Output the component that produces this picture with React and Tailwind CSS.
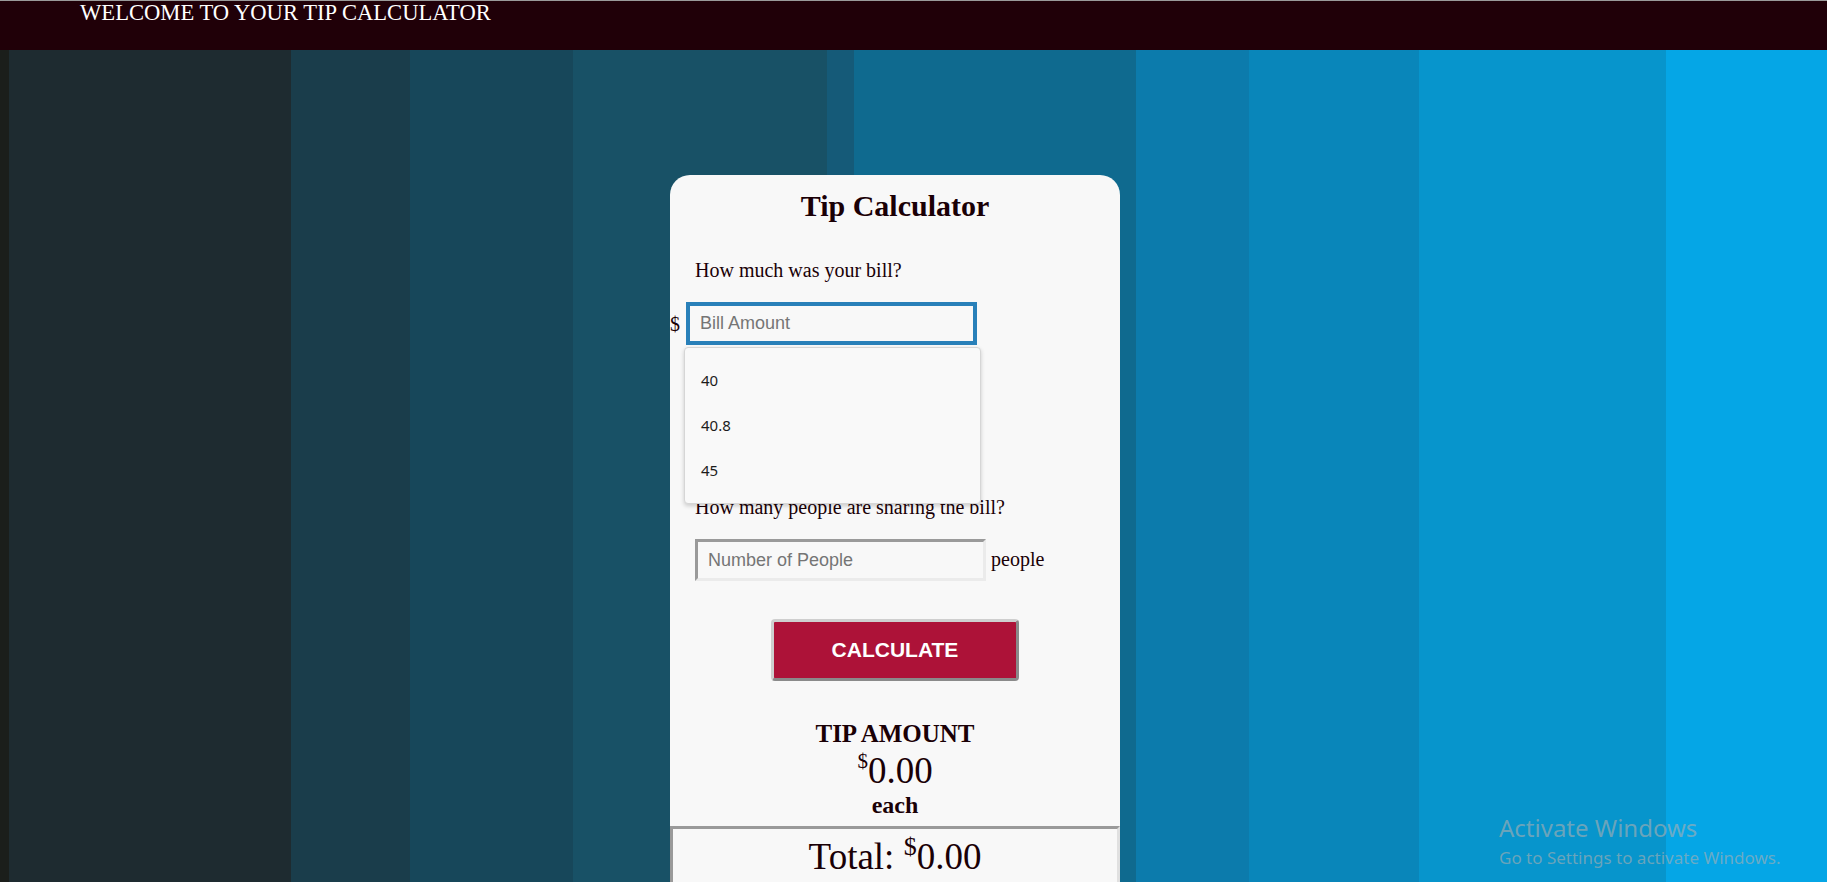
import React from "react";

// banded backdrop (matches the stepped gradient of the capture)
const backdrop =
  "bg-[linear-gradient(to_right,#1b1e1b_0_9px,#1e2b30_9px_291px,#1a3d4b_291px_410px,#17475a_410px_573px,#185166_573px_827px,#155a78_827px_854px,#0f6a8f_854px_1136px,#0c7bac_1136px_1249px,#0986ba_1249px_1419px,#0795cc_1419px_1666px,#05a6e6_1666px)]";

const suggestions = ["40", "40.8", "45"];

const App = () => {
  return (
    <div
      className={`relative min-h-screen h-[882px] overflow-hidden ${backdrop} font-['Liberation_Serif',serif] text-[#1a0006]`}
    >
      {/* Top bar */}
      <header className="h-[50px] bg-[#200008] border-t border-[#9a9a9a] pl-[80px]">
        <h2 className="text-[22.6px] leading-[24px] text-white font-normal">
          WELCOME TO YOUR TIP CALCULATOR
        </h2>
      </header>

      {/* Calculator card */}
      <div className="ml-[670px] mt-[125px] w-[450px] h-[760px] bg-[#f8f8f8] rounded-t-[20px] pt-[11px] flex flex-col">
        <h1 className="text-center text-[30px] leading-[40px] font-bold">
          Tip Calculator
        </h1>

        <p className="mt-[32px] pl-[25px] text-[20px] leading-[24px]">
          How much was your bill?
        </p>

        <div className="mt-[20px] flex items-center">
          <span className="text-[20px] leading-[24px] w-[14px]">$</span>
          <div className="relative ml-[2px]">
            <input
              type="text"
              placeholder="Bill Amount"
              className="w-[291px] h-[43px] border-[4px] border-[#2980b9] bg-[#f8f8f8] pl-[10px] text-[18px] font-['Liberation_Sans',Arial,sans-serif] placeholder:text-[#757575] outline-none"
            />
            {/* autocomplete popup */}
            <ul className="absolute left-[-2px] top-[calc(100%+2px)] w-[297px] py-[10px] bg-[#f9f9f9] border border-[#d6d6d6] rounded-[4px] shadow-[0_2px_4px_rgba(0,0,0,0.18)] font-['Noto_Sans',sans-serif] text-[15px] text-[#1c1c1c] z-10">
              {suggestions.map((s) => (
                <li key={s} className="h-[45px] leading-[44px] pl-[16px]">
                  {s}
                </li>
              ))}
            </ul>
          </div>
        </div>

        <p className="mt-[150px] pl-[25px] text-[20px] leading-[24px]">
          How many people are sharing the bill?
        </p>

        <div className="mt-[20px] pl-[25px] flex items-center gap-[5px]">
          <input
            type="text"
            placeholder="Number of People"
            className="w-[291px] h-[42px] border-[3px] border-t-[#9a9a9a] border-l-[#9a9a9a] border-r-[#ebebeb] border-b-[#ebebeb] bg-[#f8f8f8] pl-[10px] text-[18px] font-['Liberation_Sans',Arial,sans-serif] placeholder:text-[#757575] outline-none"
          />
          <span className="text-[20px] leading-[24px] -mt-[3px]">people</span>
        </div>

        <div className="mt-[38px] flex justify-center">
          <button className="w-[248px] h-[62px] bg-[#ad1238] border-[3px] border-t-[#cfcfcf] border-l-[#cfcfcf] border-r-[#8a8a8a] border-b-[#8a8a8a] rounded-[4px] text-white text-[21px] font-bold font-['Liberation_Sans',Arial,sans-serif]">
            CALCULATE
          </button>
        </div>

        {/* Result */}
        <div className="mt-[39px] text-center">
          <h3 className="text-[25px] leading-[28px] font-bold">TIP AMOUNT</h3>
          <p className="mt-[3px] text-[37px] leading-[40px]">
            <span className="relative -top-[15px] text-[21px] leading-none">$</span>
            0.00
          </p>
          <p className="text-[24px] leading-[28px] font-bold">each</p>
        </div>

        <div className="mt-[7px] flex-1 border-[3px] border-t-[#9a9a9a] border-l-[#9a9a9a] border-r-[#e0e0e0] border-b-[#e0e0e0] pt-[8px] text-center">
          <p className="text-[37px] leading-[40px]">
            Total:{" "}
            <span className="relative -top-[14px] text-[26px] leading-none">$</span>
            0.00
          </p>
        </div>
      </div>

      {/* OS watermark */}
      <div className="absolute left-[1499px] top-[813px] font-['Noto_Sans',sans-serif] text-[rgba(175,175,175,0.6)]">
        <div className="text-[24px] leading-[30px]">Activate Windows</div>
        <div className="mt-[4px] text-[17px] leading-[22px]">
          Go to Settings to activate Windows.
        </div>
      </div>
    </div>
  );
};

export default App;
